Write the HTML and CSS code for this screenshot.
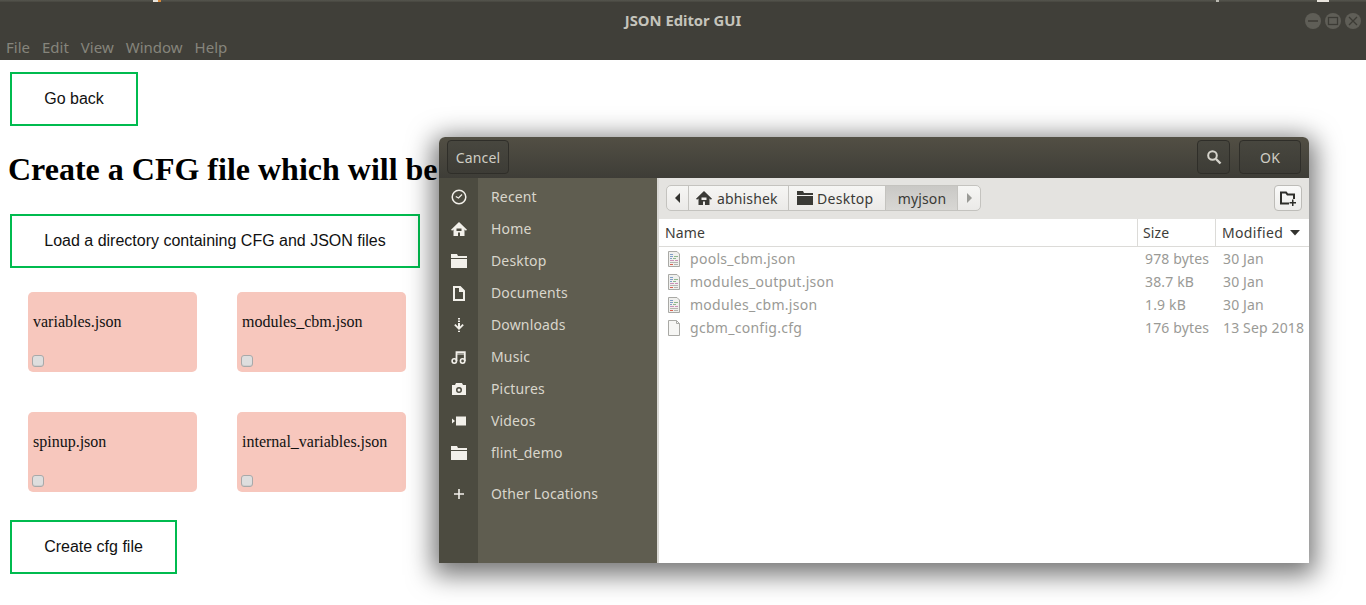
FILE: index.html
```html
<!DOCTYPE html>
<html lang="en">
<head>
<meta charset="utf-8">
<title>JSON Editor GUI</title>
<link rel="stylesheet" href="styles.css">
</head>
<body>
<svg class="defs" width="0" height="0" aria-hidden="true">
  <symbol id="doc-text" viewBox="0 0 16 16">
    <path d="M2.500 .5h8.500l2.500 2.500v12.500h-11z" fill="#f0f0ee" stroke="#a9a9a5"/>
    <path d="M4 3.500h3M4 5.500h3M4 7.500h2" stroke="#7f9fc8"/>
    <path d="M8 5.500h4M7 7.500h3" stroke="#8fb88f"/>
    <path d="M4 9.500h4M9 9.500h3" stroke="#c893b8"/>
    <path d="M4 11.500h8" stroke="#b5b5b0"/>
    <path d="M4 13.500h3" stroke="#d9604f"/>
    <path d="M8 13.500h4" stroke="#b5b5b0"/>
  </symbol>
  <symbol id="folder" viewBox="0 0 16 16">
    <path d="M0 1h6l1 2h9v2H0zM0 6h16v9H0z" fill="currentColor"/>
  </symbol>
  <symbol id="home" viewBox="0 0 16 16">
    <path d="M8 1 0 8.700l1.100 1.100L2.500 8.500V15H7v-3.500h2V15h4.500V8.500l1.400 1.300L16 8.700zM5.500 7.500h5V10h-5z" fill="currentColor" fill-rule="evenodd"/>
  </symbol>
</svg>

<header class="titlebar">
  <div class="panel-marks"><span class="mark mark-left"></span><span class="mark mark-mid"></span><span class="mark mark-right"></span></div>
  <div class="title-row">
    <span class="title">JSON Editor GUI</span>
    <div class="winbtns">
      <span class="winbtn"><svg viewBox="0 0 16 16"><path d="M3 8h10" stroke="#3c3b35" stroke-width="1.500"/></svg></span>
      <span class="winbtn"><svg viewBox="0 0 16 16"><rect x="3.500" y="4.500" width="9" height="7" fill="none" stroke="#3c3b35" stroke-width="1.300"/></svg></span>
      <span class="winbtn"><svg viewBox="0 0 16 16"><path d="m4 4 8 8M12 4l-8 8" stroke="#3c3b35" stroke-width="1.300"/></svg></span>
    </div>
  </div>
  <nav class="menubar">
    <span>File</span><span>Edit</span><span>View</span><span>Window</span><span>Help</span>
  </nav>
</header>

<main class="page">
  <button class="action back">Go back</button>
  <h1 class="heading">Create a CFG file which will be</h1>
  <button class="action load">Load a directory containing CFG and JSON files</button>
  <div class="cards">
    <div class="card"><span class="card-name">variables.json</span><input class="check" type="checkbox"></div>
    <div class="card"><span class="card-name">modules_cbm.json</span><input class="check" type="checkbox"></div>
    <div class="card"><span class="card-name">spinup.json</span><input class="check" type="checkbox"></div>
    <div class="card"><span class="card-name">internal_variables.json</span><input class="check" type="checkbox"></div>
  </div>
  <button class="action create">Create cfg file</button>
</main>

<section class="dialog">
  <div class="dlg-header">
    <button class="dlg-btn cancel">Cancel</button>
    <div class="dlg-spacer"></div>
    <button class="dlg-btn search"><svg width="16" height="16" viewBox="0 0 16 16"><circle cx="6.500" cy="6.500" r="4.300" fill="none" stroke="#d6d4cc" stroke-width="2"/><path d="m10 10 4.500 4.500" stroke="#d6d4cc" stroke-width="2.400"/></svg></button>
    <button class="dlg-btn ok">OK</button>
  </div>
  <div class="dlg-body">
    <aside class="sidebar">
      <ul class="places">
        <li><span class="pl-icon"><svg width="16" height="16" viewBox="0 0 16 16"><circle cx="8" cy="8" r="6.800" fill="none" stroke="currentColor" stroke-width="1.500"/><path d="m4.800 7.500 2.700 1.500L11 5.500" fill="none" stroke="currentColor" stroke-width="1.200"/></svg></span><span class="pl-name">Recent</span></li>
        <li><span class="pl-icon"><svg width="16" height="16"><use href="#home"/></svg></span><span class="pl-name">Home</span></li>
        <li><span class="pl-icon"><svg width="16" height="16"><use href="#folder"/></svg></span><span class="pl-name">Desktop</span></li>
        <li><span class="pl-icon"><svg width="16" height="16" viewBox="0 0 16 16"><path d="M2 1h7.500L14 5.500V16H2zM4 3v11h8V7H8V3z" fill="currentColor" fill-rule="evenodd"/></svg></span><span class="pl-name">Documents</span></li>
        <li><span class="pl-icon"><svg width="16" height="16" viewBox="0 0 16 16"><path d="M7 1h2v1.500H7zM7 3.500h2v1.500H7zM7 6h2v3.500l2.500-2.500 1.300 1.300L8 13 3.200 8.300 4.500 7 7 9.500zM7 13.800h2V15H7z" fill="currentColor"/></svg></span><span class="pl-name">Downloads</span></li>
        <li><span class="pl-icon"><svg width="16" height="16" viewBox="0 0 16 16"><path d="M5.500 12V3.200h8.300V12" fill="none" stroke="currentColor" stroke-width="1.800"/><path d="M5.500 5h8.300" stroke="currentColor" stroke-width="1"/><circle cx="3.300" cy="12" r="2.200" fill="none" stroke="currentColor" stroke-width="1.600"/><circle cx="11.600" cy="12" r="2.200" fill="none" stroke="currentColor" stroke-width="1.600"/></svg></span><span class="pl-name">Music</span></li>
        <li><span class="pl-icon"><svg width="16" height="16" viewBox="0 0 16 16"><path d="M5 2h6l1 2h3v10H1V4h3zM8 6a3 3 0 1 0 0 6 3 3 0 0 0 0-6zm0 1.500a1.500 1.500 0 1 1 0 3 1.500 1.500 0 0 1 0-3z" fill="currentColor" fill-rule="evenodd"/></svg></span><span class="pl-name">Pictures</span></li>
        <li><span class="pl-icon"><svg width="16" height="16" viewBox="0 0 16 16"><path d="M5 3.500h10v9H5zM1 5.500l3 2.500-3 2.500z" fill="currentColor"/></svg></span><span class="pl-name">Videos</span></li>
        <li><span class="pl-icon"><svg width="16" height="16"><use href="#folder"/></svg></span><span class="pl-name">flint_demo</span></li>
        <li class="other"><span class="pl-icon"><svg width="16" height="16" viewBox="0 0 16 16"><path d="M7.200 3h1.600v4.200H13v1.600H8.800V13H7.200V8.800H3V7.200h4.200z" fill="currentColor"/></svg></span><span class="pl-name">Other Locations</span></li>
      </ul>
    </aside>
    <div class="browser">
      <div class="pathbar">
        <div class="crumbs">
          <span class="crumb arrow"><svg width="8" height="10" viewBox="0 0 8 10"><path d="M6 0v10L1 5z" fill="#33332f"/></svg></span>
          <span class="crumb home-crumb"><svg width="16" height="16"><use href="#home"/></svg>abhishek</span>
          <span class="crumb desk-crumb"><svg width="16" height="16"><use href="#folder"/></svg>Desktop</span>
          <span class="crumb active">myjson</span>
          <span class="crumb arrow end"><svg width="8" height="10" viewBox="0 0 8 10"><path d="M2 0v10l5-5z" fill="#9a9a96"/></svg></span>
        </div>
        <button class="newfolder"><svg width="18" height="16" viewBox="0 0 18 16"><path d="M1 1.500h6.500l1.500 2h7v5.500h-2V5.500H8L6.500 3.500H3v9h7v2H1z" fill="#2e2e2a"/><path d="M13 9.500h1.500V12H17v1.500h-2.500V16H13v-2.500h-2.500V12H13z" fill="#2e2e2a"/></svg></button>
      </div>
      <div class="list-head">
        <span class="col-name">Name</span>
        <span class="col-size">Size</span>
        <span class="col-mod">Modified<svg width="10" height="6" viewBox="0 0 10 6"><path d="M0 0h10L5 5.500z" fill="#33332f"/></svg></span>
      </div>
      <div class="files">
        <div class="file"><svg class="ficon" width="16" height="16"><use href="#doc-text"/></svg><span class="col-name">pools_cbm.json</span><span class="col-size">978 bytes</span><span class="col-mod">30 Jan</span></div>
        <div class="file"><svg class="ficon" width="16" height="16"><use href="#doc-text"/></svg><span class="col-name">modules_output.json</span><span class="col-size">38.7 kB</span><span class="col-mod">30 Jan</span></div>
        <div class="file"><svg class="ficon" width="16" height="16"><use href="#doc-text"/></svg><span class="col-name">modules_cbm.json</span><span class="col-size">1.9 kB</span><span class="col-mod">30 Jan</span></div>
        <div class="file"><svg class="ficon" width="16" height="16" viewBox="0 0 16 16"><path d="M2.500 .5h8l3 3v12h-11z" fill="#f6f6f4" stroke="#a9a9a5"/><path d="M10.500 .5v3h3" fill="none" stroke="#a9a9a5"/></svg><span class="col-name">gcbm_config.cfg</span><span class="col-size">176 bytes</span><span class="col-mod">13 Sep 2018</span></div>
      </div>
    </div>
  </div>
</section>
</body>
</html>
```
FILE: styles.css
```css
* { box-sizing: border-box; }
html, body { margin: 0; height: 605px; overflow: hidden; background: #fff; }
body { font-family: "Liberation Serif", serif; position: relative; }
.defs { position: absolute; }

.titlebar { height: 60px; background: #403f39; display: flex; flex-direction: column; font-family: "Noto Sans", sans-serif; }
.panel-marks { height: 2px; background: linear-gradient(#55554e, #47463f); position: relative; }
.mark { position: absolute; top: 0; height: 2px; background: #e8e4dc; }
.mark-left { left: 153px; width: 8px; background: linear-gradient(90deg, #e8e4dc 5px, #d98a3a 5px); }
.mark-mid { left: 1216px; width: 3px; background: #b9b8b0; }
.mark-right { left: 1317px; width: 12px; }
.title-row { height: 34px; display: flex; align-items: center; justify-content: center; position: relative; }
.title { font-size: 14.8px; font-weight: 700; color: #c5c4bc; margin-top: 2px; }
.winbtns { position: absolute; right: 5px; top: 11px; display: flex; gap: 4px; }
.winbtn { width: 16px; height: 16px; border-radius: 50%; background: #5f5e57; display: block; }
.winbtn svg { display: block; width: 16px; height: 16px; }
.menubar { height: 22px; display: flex; gap: 12px; padding-left: 6px; align-items: center; font-size: 15px; color: #86857c; }

.page { padding: 12px 0 0 10px; }
.action { display: block; background: #fff; border: 2px solid #00bb4f; border-radius: 0; padding: 16px 32px; font: 16px/18px "Liberation Sans", sans-serif; color: #111; }
.back { width: 128px; }
.load { width: 410px; white-space: nowrap; }
.create { width: 167px; margin-top: 28px; }
.heading { font: 700 32px/37px "Liberation Serif", serif; margin: 25px 0 26px -2px; white-space: nowrap; color: #000; }
.cards { display: grid; grid-template-columns: 169px 169px; grid-auto-rows: 80px; gap: 40px; margin: 24px 0 0 18px; }
.card { background: #f7c7bd; border-radius: 5px; padding: 20px 5px 0; display: flex; flex-direction: column; align-items: flex-start; font-size: 16px; color: #111; }
.card-name { line-height: 20px; height: 43px; }
.check { appearance: none; width: 12px; height: 12px; margin: 0 0 0 -1px; background: #dedede; border: 1px solid #a9a9a9; border-radius: 3px; box-shadow: inset 0 -1px 0 #cfcfcf; }

.dialog { position: absolute; left: 439px; top: 137px; width: 870px; height: 426px; border-radius: 6px 6px 0 0; box-shadow: 0 6px 26px 6px rgba(0,0,0,.55); display: flex; flex-direction: column; font-family: "Noto Sans", sans-serif; font-size: 14px; letter-spacing: .15px; background: #fff; }
.dlg-header { height: 41px; border-radius: 6px 6px 0 0; background: linear-gradient(#524f44, #3e3d37); display: flex; align-items: flex-start; padding: 3px 8px 0; }
.dlg-spacer { flex: 1; }
.dlg-btn { height: 34px; border: 1px solid #2f2e29; border-radius: 4px; background: linear-gradient(#48473f, #3d3c36); color: #cfcdc4; font: 14px "Noto Sans", sans-serif; letter-spacing: .15px; padding: 0; }
.cancel { width: 62px; }
.search { width: 33px; margin-right: 9px; display: flex; align-items: center; justify-content: center; }
.ok { width: 62px; }
.dlg-body { flex: 1; display: flex; min-height: 0; }
.sidebar { width: 220px; background: linear-gradient(90deg, #4c4b40 39px, #5f5d50 39px); border-right: 2px solid #d9d8d4; }
.places { list-style: none; margin: 0; padding: 3px 0 0; }
.places li { height: 32px; display: flex; align-items: center; }
.places .other { margin-top: 9px; }
.pl-icon { width: 39px; height: 16px; padding-left: 12px; color: #f2f0ea; display: block; }
.pl-icon svg { display: block; }
.pl-name { margin-left: 13px; padding-bottom: 2px; color: #d9d6cc; }
.browser { flex: 1; display: flex; flex-direction: column; min-width: 0; }
.pathbar { height: 41px; background: #e4e3e0; display: flex; justify-content: space-between; padding: 7px 7px 0 7px; }
.crumbs { height: 26px; display: flex; border: 1px solid #c4c3bf; border-radius: 5px; background: linear-gradient(#f6f6f4, #ebeae8); color: #3a3a36; overflow: hidden; }
.crumb { display: flex; align-items: center; gap: 5px; border-right: 1px solid #c4c3bf; color: #3a3a36; height: 100%; }
.crumb svg { display: block; color: #3a3a36; }
.arrow { width: 22px; justify-content: center; }
.arrow.end { border-right: 0; width: 22px; }
.home-crumb { width: 100px; padding-left: 7px; }
.desk-crumb { width: 97px; padding-left: 8px; gap: 4px; letter-spacing: .3px; }
.active { width: 72px; padding-left: 1px; justify-content: center; background: linear-gradient(#c9c8c5, #d8d7d4); }
.newfolder { width: 28px; height: 26px; border: 1px solid #bdbcb8; border-radius: 4px; background: linear-gradient(#fafaf9, #eeedeb); display: flex; align-items: center; justify-content: center; padding: 0; }
.list-head { height: 28px; display: flex; align-items: center; border-bottom: 1px solid #dcdbd8; color: #3d3d39; background: #fff; }
.list-head .col-name { width: 479px; padding-left: 6px; height: 100%; display: flex; align-items: center; border-right: 1px solid #dcdbd8; }
.list-head .col-size { width: 78px; padding-left: 5px; height: 100%; display: flex; align-items: center; border-right: 1px solid #dcdbd8; }
.list-head .col-mod { padding-left: 6px; display: flex; align-items: center; gap: 7px; letter-spacing: .35px; }
.files { flex: 1; }
.file { height: 23px; display: flex; align-items: center; color: #9a9a96; }
.ficon { margin-left: 7px; flex: none; }
.file .col-name { width: 447px; margin-left: 8px; letter-spacing: .28px; }
.file .col-size { width: 86px; padding-left: 8px; flex: none; }
.file .col-mod { white-space: nowrap; }
```
